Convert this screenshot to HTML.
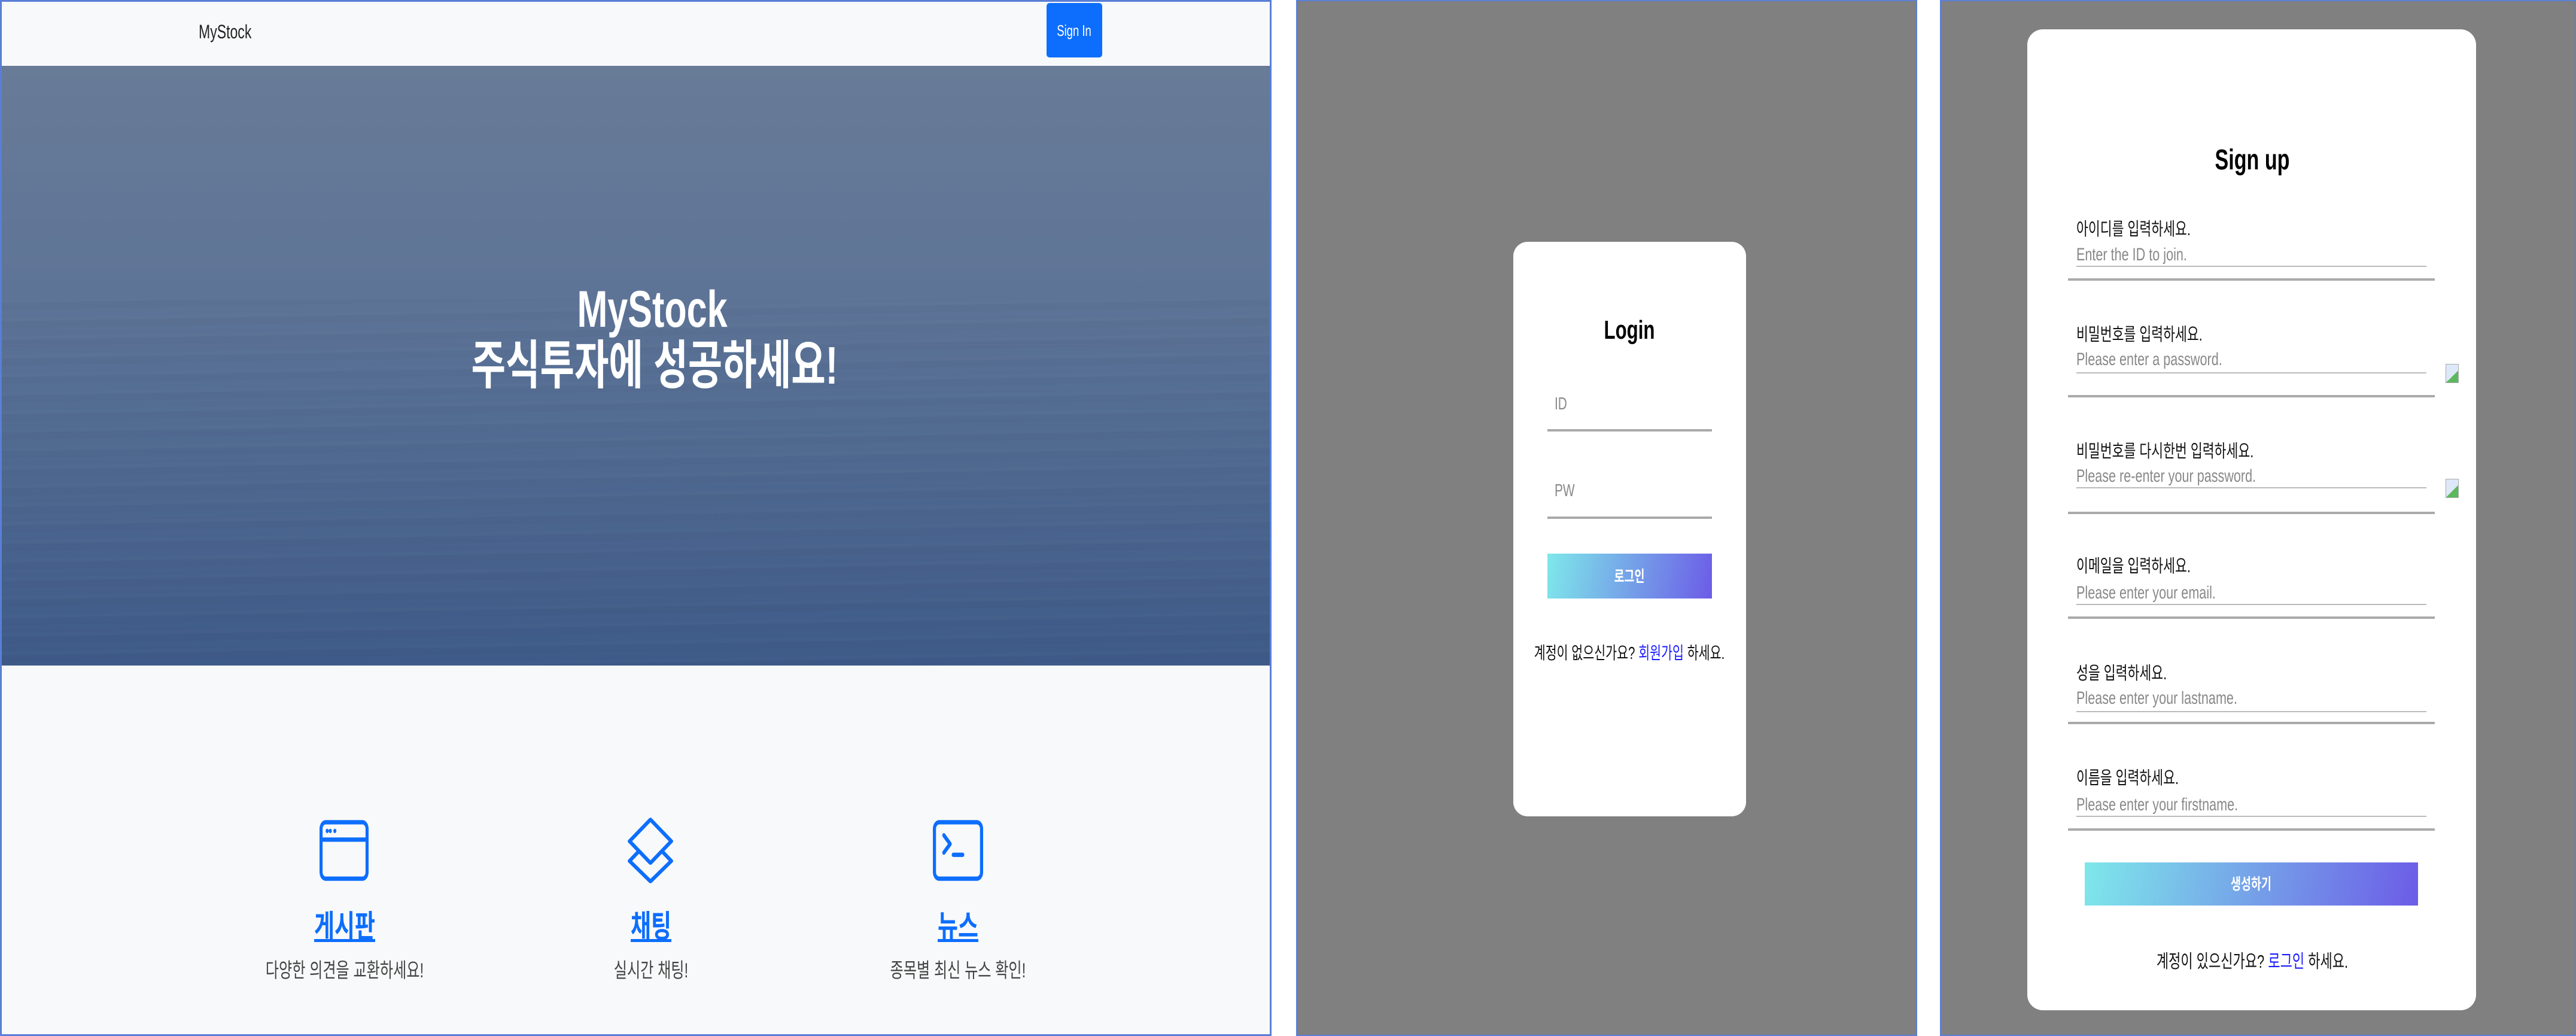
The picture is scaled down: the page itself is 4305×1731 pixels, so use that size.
<!DOCTYPE html>
<html><head><meta charset="utf-8">
<style>
*{margin:0;padding:0;box-sizing:border-box}
body{width:4305px;height:1731px;position:relative;overflow:hidden;background:#fff;font-family:"Liberation Sans","Noto Sans CJK KR",sans-serif}
.a{position:absolute}
.t{position:absolute;white-space:nowrap;line-height:1}
.c{transform:translateX(-50%) scaleX(.71)}
.l{transform:scaleX(.72);transform-origin:left center}
</style></head><body>

<!-- Panel 1 -->
<div class="a" style="left:0;top:0;width:2125px;height:1731px;background:#f8f9fa;border:3px solid #5a7fd6"></div>
<div class="t l" style="left:332px;top:37px;font-size:32px;color:#222">MyStock</div>
<div class="a" style="left:1749px;top:5px;width:93px;height:91px;background:#0d6efd;border-radius:5px"></div>
<div class="t c" style="left:1795px;top:38px;font-size:26px;color:#fff">Sign In</div>
<div class="a" style="left:3px;top:110px;width:2119px;height:1002px;background:linear-gradient(180deg,#687b97 0%,#5f7597 35%,#4f6990 65%,#3e5a88 100%)"></div>
<div class="a" style="left:3px;top:500px;width:2119px;height:612px;opacity:.15;background:repeating-linear-gradient(179deg,rgba(255,255,255,.08) 0 6px,rgba(0,0,30,.12) 6px 18px,rgba(255,255,255,0) 18px 31px)"></div>
<div class="t c" style="left:1090px;top:474px;font-size:86px;color:#fff;font-weight:bold">MyStock</div>
<div class="t c" style="left:1094px;top:567px;font-size:88px;color:#fff;font-weight:bold">주식투자에 성공하세요!</div>

<svg class="a" style="left:534px;top:1363px" width="82" height="116" viewBox="0 0 16 16" preserveAspectRatio="none" fill="#0d6efd">
<path d="M2.5 4a.5.5 0 1 0 0-1 .5.5 0 0 0 0 1zm1.5-.5a.5.5 0 1 1-1 0 .5.5 0 0 1 1 0zm1 .5a.5.5 0 1 0 0-1 .5.5 0 0 0 0 1z"/>
<path d="M2 1a2 2 0 0 0-2 2v10a2 2 0 0 0 2 2h12a2 2 0 0 0 2-2V3a2 2 0 0 0-2-2H2zm13 2v2H1V3a1 1 0 0 1 1-1h12a1 1 0 0 1 1 1zM2 14a1 1 0 0 1-1-1V6h14v7a1 1 0 0 1-1 1H2z"/></svg>
<svg class="a" style="left:1042px;top:1366px" width="90" height="110" viewBox="0 0 16 20" preserveAspectRatio="none" fill="none" stroke="#0d6efd" stroke-width="1.1" stroke-linejoin="round">
<path d="M8 0.6 L14.2 7.2 L8 13.8 L1.8 7.2 Z"/>
<path d="M4.6 10.2 L1.8 13.2 L8 19.4 L14.2 13.2 L11.4 10.2"/></svg>
<svg class="a" style="left:1559px;top:1363px" width="84" height="116" viewBox="0 0 16 16" preserveAspectRatio="none" fill="#0d6efd">
<path d="M6 9a.5.5 0 0 1 .5-.5h3a.5.5 0 0 1 0 1h-3A.5.5 0 0 1 6 9zM3.854 4.146a.5.5 0 1 0-.708.708L4.793 6.5 3.146 8.146a.5.5 0 1 0 .708.708l2-2a.5.5 0 0 0 0-.708l-2-2z"/>
<path d="M2 1a2 2 0 0 0-2 2v10a2 2 0 0 0 2 2h12a2 2 0 0 0 2-2V3a2 2 0 0 0-2-2H2zm12 1a1 1 0 0 1 1 1v10a1 1 0 0 1-1 1H2a1 1 0 0 1-1-1V3a1 1 0 0 1 1-1h12z"/></svg>

<div class="t c" style="left:576px;top:1523px;font-size:52px;color:#0d6efd;font-weight:bold;text-decoration:underline">게시판</div>
<div class="t c" style="left:1088px;top:1523px;font-size:52px;color:#0d6efd;font-weight:bold;text-decoration:underline">채팅</div>
<div class="t c" style="left:1601px;top:1523px;font-size:52px;color:#0d6efd;font-weight:bold;text-decoration:underline">뉴스</div>
<div class="t c" style="left:576px;top:1605px;font-size:34px;color:#444">다양한 의견을 교환하세요!</div>
<div class="t c" style="left:1088px;top:1605px;font-size:34px;color:#444">실시간 채팅!</div>
<div class="t c" style="left:1601px;top:1605px;font-size:34px;color:#444">종목별 최신 뉴스 확인!</div>

<!-- Panel 2 -->
<div class="a" style="left:2166px;top:0;width:1038px;height:1731px;background:#808080;border:2px solid #5a7fd6"></div>
<div class="a" style="left:2529px;top:404px;width:389px;height:960px;background:#fff;border-radius:24px"></div>
<div class="t c" style="left:2723px;top:530px;font-size:44px;font-weight:bold;color:#000">Login</div>
<div class="t l" style="left:2598px;top:661px;font-size:29px;color:#888">ID</div>
<div class="a" style="left:2586px;top:717px;width:275px;height:4px;background:#aaa"></div>
<div class="t l" style="left:2598px;top:806px;font-size:29px;color:#888">PW</div>
<div class="a" style="left:2586px;top:863px;width:275px;height:4px;background:#aaa"></div>
<div class="a" style="left:2586px;top:925px;width:275px;height:75px;background:linear-gradient(100deg,#7ee8ea,#6c5ce7)"></div>
<div class="t c" style="left:2723px;top:950px;font-size:26px;color:#fff;font-weight:bold">로그인</div>
<div class="t c" style="left:2723px;top:1078px;font-size:29px;color:#111">계정이 없으신가요? <span style="color:#1a1aff">회원가입</span> 하세요.</div>

<!-- Panel 3 -->
<div class="a" style="left:3242px;top:0;width:1063px;height:1731px;background:#808080;border:2px solid #5a7fd6"></div>
<div class="a" style="left:3388px;top:49px;width:750px;height:1639px;background:#fff;border-radius:26px"></div>
<div class="t c" style="left:3764px;top:244px;font-size:48px;font-weight:bold;color:#000">Sign up</div>

<div class="t l" style="left:3470px;top:369px;font-size:30px;color:#111">아이디를 입력하세요.</div>
<div class="t l" style="left:3470px;top:411px;font-size:30px;color:#888">Enter the ID to join.</div>
<div class="a" style="left:3470px;top:444px;width:585px;height:2px;background:#bbb"></div>
<div class="a" style="left:3456px;top:465px;width:613px;height:4px;background:#aaa"></div>

<div class="t l" style="left:3470px;top:545px;font-size:30px;color:#111">비밀번호를 입력하세요.</div>
<div class="t l" style="left:3470px;top:586px;font-size:30px;color:#888">Please enter a password.</div>
<div class="a" style="left:3470px;top:622px;width:585px;height:2px;background:#bbb"></div>
<div class="a" style="left:3456px;top:660px;width:613px;height:4px;background:#aaa"></div>
<div class="a" style="left:4087px;top:608px;width:22px;height:32px;border:1px solid #aaa;background:linear-gradient(135deg,#dde8f8 60%,#5cb85c 60%)"></div>

<div class="t l" style="left:3470px;top:740px;font-size:30px;color:#111">비밀번호를 다시한번 입력하세요.</div>
<div class="t l" style="left:3470px;top:781px;font-size:30px;color:#888">Please re-enter your password.</div>
<div class="a" style="left:3470px;top:814px;width:585px;height:2px;background:#bbb"></div>
<div class="a" style="left:3456px;top:855px;width:613px;height:4px;background:#aaa"></div>
<div class="a" style="left:4087px;top:800px;width:22px;height:32px;border:1px solid #aaa;background:linear-gradient(135deg,#dde8f8 60%,#5cb85c 60%)"></div>

<div class="t l" style="left:3470px;top:932px;font-size:30px;color:#111">이메일을 입력하세요.</div>
<div class="t l" style="left:3470px;top:976px;font-size:30px;color:#888">Please enter your email.</div>
<div class="a" style="left:3470px;top:1009px;width:585px;height:2px;background:#bbb"></div>
<div class="a" style="left:3456px;top:1030px;width:613px;height:4px;background:#aaa"></div>

<div class="t l" style="left:3470px;top:1111px;font-size:30px;color:#111">성을 입력하세요.</div>
<div class="t l" style="left:3470px;top:1152px;font-size:30px;color:#888">Please enter your lastname.</div>
<div class="a" style="left:3470px;top:1188px;width:585px;height:2px;background:#bbb"></div>
<div class="a" style="left:3456px;top:1206px;width:613px;height:4px;background:#aaa"></div>

<div class="t l" style="left:3470px;top:1286px;font-size:30px;color:#111">이름을 입력하세요.</div>
<div class="t l" style="left:3470px;top:1330px;font-size:30px;color:#888">Please enter your firstname.</div>
<div class="a" style="left:3470px;top:1363px;width:585px;height:2px;background:#bbb"></div>
<div class="a" style="left:3456px;top:1384px;width:613px;height:4px;background:#aaa"></div>

<div class="a" style="left:3484px;top:1441px;width:557px;height:72px;background:linear-gradient(100deg,#7ee8ea,#6c5ce7)"></div>
<div class="t c" style="left:3762px;top:1464px;font-size:26px;color:#fff;font-weight:bold">생성하기</div>
<div class="t c" style="left:3764px;top:1591px;font-size:31px;color:#111">계정이 있으신가요? <span style="color:#1a1aff">로그인</span> 하세요.</div>
</body></html>
